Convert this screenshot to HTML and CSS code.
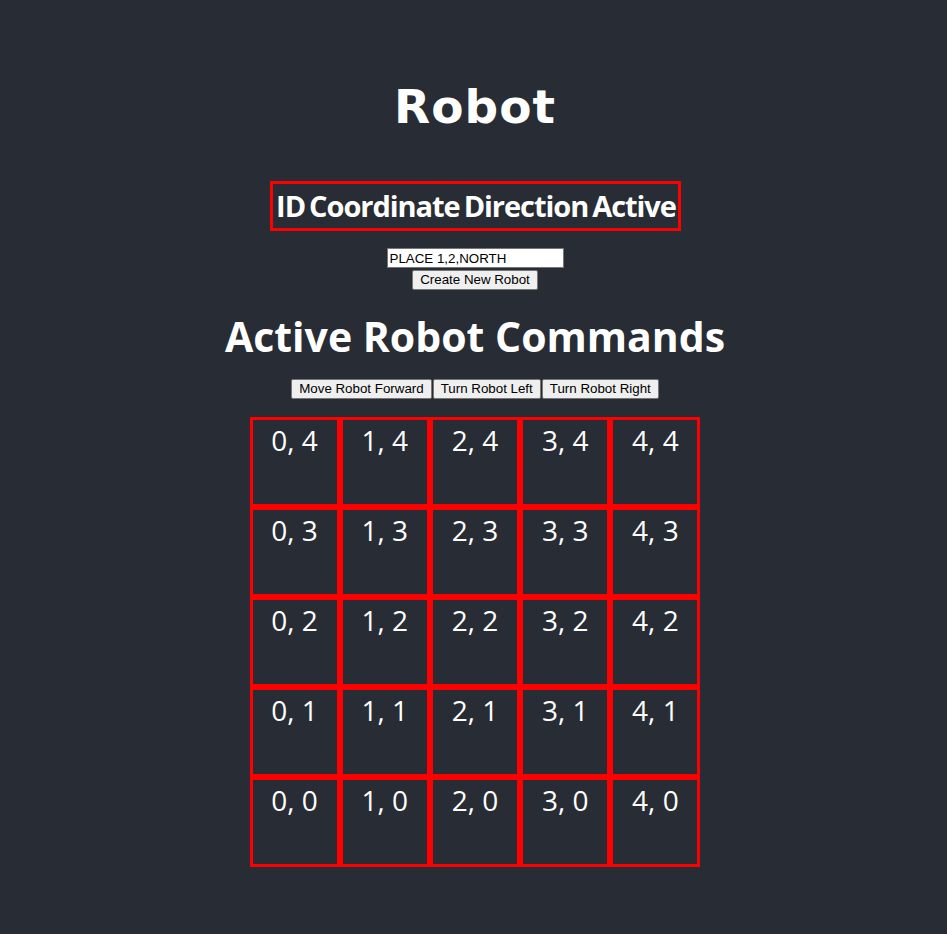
FILE: index.html
```html
<!DOCTYPE html>
<html>
<head>
<meta charset="utf-8">
<title>Robot</title>
<link rel="stylesheet" href="styles.css">
</head>
<body>
<div class="app">
  <h1 class="title">Robot</h1>
  <div class="table-head">
    <span class="th">ID</span>
    <span class="th">Coordinate</span>
    <span class="th">Direction</span>
    <span class="th">Active</span>
  </div>
  <input class="cmd-input" type="text" value="PLACE 1,2,NORTH">
  <button class="btn create">Create New Robot</button>
  <h2 class="subtitle">Active Robot Commands</h2>
  <div class="controls">
    <button class="btn">Move Robot Forward</button>
    <button class="btn">Turn Robot Left</button>
    <button class="btn">Turn Robot Right</button>
  </div>
  <div class="board">
    <div class="cell">0, 4</div><div class="cell">1, 4</div><div class="cell">2, 4</div><div class="cell">3, 4</div><div class="cell">4, 4</div>
    <div class="cell">0, 3</div><div class="cell">1, 3</div><div class="cell">2, 3</div><div class="cell">3, 3</div><div class="cell">4, 3</div>
    <div class="cell">0, 2</div><div class="cell">1, 2</div><div class="cell">2, 2</div><div class="cell">3, 2</div><div class="cell">4, 2</div>
    <div class="cell">0, 1</div><div class="cell">1, 1</div><div class="cell">2, 1</div><div class="cell">3, 1</div><div class="cell">4, 1</div>
    <div class="cell">0, 0</div><div class="cell">1, 0</div><div class="cell">2, 0</div><div class="cell">3, 0</div><div class="cell">4, 0</div>
  </div>
</div>
</body>
</html>
```
FILE: styles.css
```css
html, body {
  margin: 0;
  padding: 0;
  background: #282c34;
  color: #ffffff;
  font-family: "Open Sans", "Noto Sans", sans-serif;
}

.app {
  display: flex;
  flex-direction: column;
  align-items: center;
  padding: 79px 0 0 3px;
  min-height: 934px;
  box-sizing: border-box;
}

.title {
  margin: 0;
  font-family: "DejaVu Sans", Verdana, sans-serif;
  font-weight: bold;
  font-size: 47px;
  line-height: 56px;
  letter-spacing: 1px;
}

.table-head {
  margin-top: 46px;
  display: flex;
  gap: 4px;
  justify-content: center;
  width: 411px;
  height: 50px;
  box-sizing: border-box;
  border: 3px solid #ff0000;
  padding: 0 2px 0 4px;
}

.th {
  font-weight: 700;
  font-size: 29px;
  line-height: 44px;
  letter-spacing: -1.05px;
}

.cmd-input {
  margin-top: 17px;
  width: 177px;
  height: 20px;
  box-sizing: border-box;
  border: 1px solid #767676;
  padding: 1px 2px;
  background: #ffffff;
  color: #000000;
  font-family: "Liberation Sans", Arial, sans-serif;
  font-size: 13.333px;
  outline: none;
}

.btn {
  height: 20px;
  box-sizing: border-box;
  margin: 0;
  padding: 1px 7px;
  border: 1px solid #767676;
  border-radius: 2px;
  background: #efefef;
  color: #000000;
  font-family: "Liberation Sans", Arial, sans-serif;
  font-size: 13.333px;
  line-height: 16px;
}

.create {
  margin-top: 2px;
}

.subtitle {
  margin: 22px 0 0;
  font-weight: 700;
  font-size: 41px;
  line-height: 48px;
}

.controls {
  margin-top: 19px;
  display: flex;
  gap: 1px;
}

.board {
  margin-top: 18px;
  display: grid;
  width: 451px;
  grid-template-columns: repeat(5, 1fr);
  grid-auto-rows: 90px;
}

.cell {
  box-sizing: border-box;
  border: 3px solid #ff0000;
  text-align: center;
  font-size: 28px;
  line-height: 40px;
}
```
